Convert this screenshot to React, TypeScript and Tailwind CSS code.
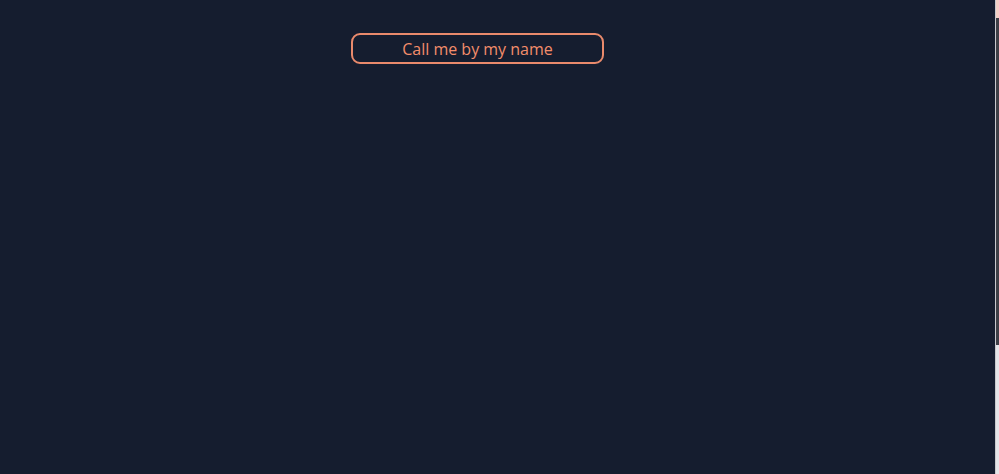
export default function App() {
  return (
    <div className="flex h-[474px] w-full bg-[#ffffff]">
      <div className="flex-1 bg-[#151d2f] pl-[351px] pt-[33px]">
        <button className="flex h-[31px] w-[253px] items-center justify-center rounded-[9px] border-2 border-[#e98a6c] bg-transparent text-[16px] text-[#f38d6b] [font-family:'Open_Sans',sans-serif]">
          Call me by my name
        </button>
      </div>
      <div className="w-px bg-[#c8c8cc]" />
      <div className="flex w-[3px] flex-col">
        <div className="h-[18px] bg-[#f3cfc6]" />
        <div className="h-[327px] bg-[#3d3f47]" />
        <div className="flex-1 bg-[#e4e4e8]" />
      </div>
    </div>
  )
}
